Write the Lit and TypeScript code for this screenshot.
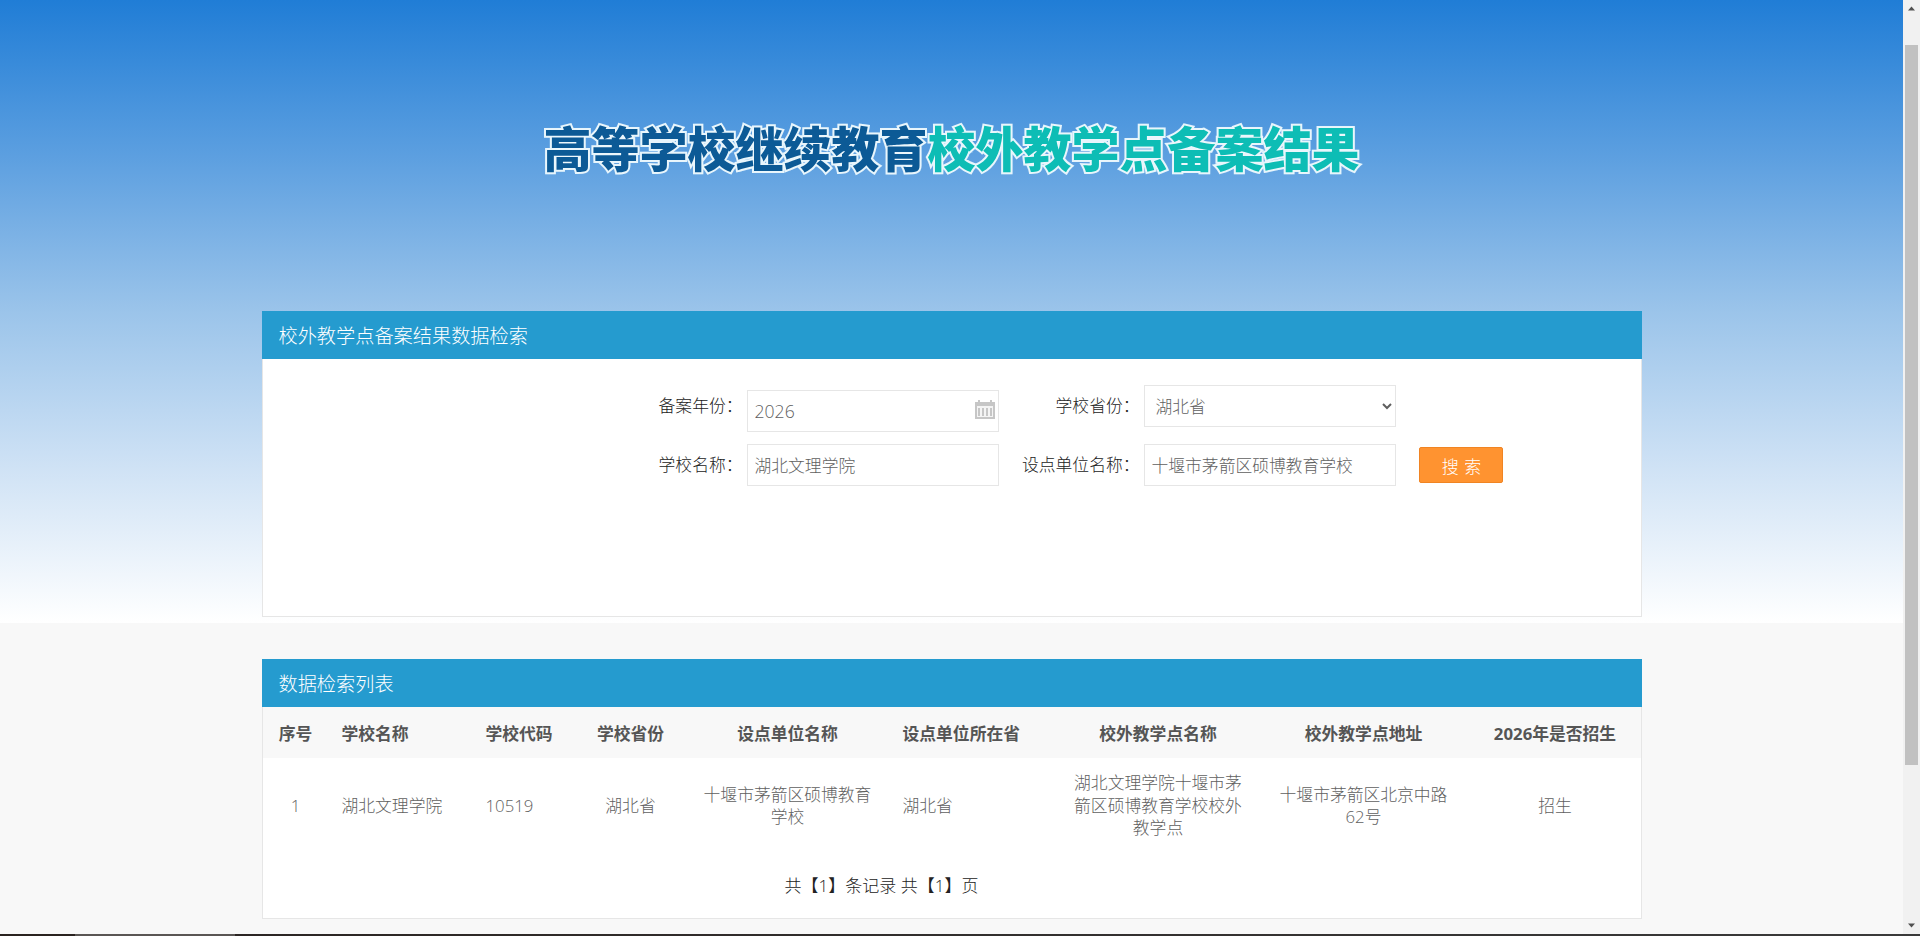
import { LitElement, html, css } from 'lit';
import { customElement } from 'lit/decorators.js';

const cols = [
  { title: '序号', cls: 'c1 center', value: '1' },
  { title: '学校名称', cls: 'c2', value: '湖北文理学院' },
  { title: '学校代码', cls: 'c3', value: '10519' },
  { title: '学校省份', cls: 'c4 center', value: '湖北省' },
  { title: '设点单位名称', cls: 'c5 center', value: '十堰市茅箭区硕博教育学校' },
  { title: '设点单位所在省', cls: 'c6', value: '湖北省' },
  { title: '校外教学点名称', cls: 'c7 center', value: '湖北文理学院十堰市茅箭区硕博教育学校校外教学点' },
  { title: '校外教学点地址', cls: 'c8 center', value: '十堰市茅箭区北京中路62号' },
  { title: '2026年是否招生', cls: 'c9 center', value: '招生' },
];

@customElement('app-root')
export class AppRoot extends LitElement {
  static styles = css`
    :host {
      display: flex;
      flex-direction: column;
      height: 936px;
      overflow: hidden;
      background: #f8f8f8;
      font-family: "Open Sans", "Noto Sans CJK SC", sans-serif;
      font-size: 16.8px;
      color: #333;
    }
    * {
      box-sizing: border-box;
    }
    .window {
      display: flex;
      height: 934px;
    }
    .page {
      flex: 1;
      min-width: 0;
      overflow: hidden;
    }

    /* header band */
    .hero {
      height: 623px;
      padding-top: 311px;
      position: relative;
      background: linear-gradient(180deg, #207dd6 0%, #5c9fe0 25%, #9bc4ea 50%, #cfe2f5 75%, #ffffff 100%);
    }
    .title {
      position: absolute;
      top: 113px;
      left: 0;
      right: 0;
      text-align: center;
      font-family: "Noto Sans CJK SC", sans-serif;
      font-size: 48px;
      line-height: 66px;
      font-weight: 900;
      white-space: nowrap;
      color: #0c5a96;
      -webkit-text-stroke: 4px #e6f5fc;
      paint-order: stroke fill;
      text-shadow: 0 0 3px rgba(255, 255, 255, 0.5);
      filter: blur(0.5px);
    }
    .title em {
      font-style: normal;
      color: #0dbdb5;
    }

    /* panels */
    .panel {
      width: 1380px;
      margin: 0 auto;
      background: #fff;
      border: 1px solid #e6e6e6;
      border-top: 0;
    }
    .panel-head {
      height: 48px;
      margin: 0 -1px;
      padding: 1px 0 0 17px;
      background: #259bcf;
      color: #fff;
      font-size: 19.2px;
      font-weight: 300;
      line-height: 47px;
    }
    .search-body {
      height: 257px;
      padding: 26px 0 0 339px;
    }
    .form {
      display: grid;
      grid-template-columns: 145px 252px 145px 252px auto;
      grid-template-rows: 47px 42px;
      row-gap: 12px;
      justify-content: start;
    }
    .form label {
      height: 42px;
      padding-right: 4px;
      text-align: right;
      line-height: 42px;
      font-weight: 300;
      color: #222;
      white-space: nowrap;
    }
    .field {
      position: relative;
      height: 42px;
    }
    .field.lower {
      margin-top: 5px;
    }
    .field input,
    .field select {
      width: 100%;
      height: 42px;
      padding: 0 7px;
      border: 1px solid #e6e6e6;
      border-radius: 0;
      background: #fff;
      color: #5f5f5f;
      font: inherit;
      font-weight: 300;
      outline: none;
    }
    .field.lower input {
      font-size: 17.6px;
    }
    .cal {
      position: absolute;
      top: 9px;
      right: 4px;
      width: 20px;
      height: 20px;
    }
    .btn {
      width: 84px;
      height: 36px;
      margin: 3px 0 0 23px;
      padding: 0 0 0 2px;
      border: 1px solid #f08423;
      border-radius: 2px;
      background: #ff9330;
      color: #fff;
      font: inherit;
      font-size: 17px;
      font-weight: 300;
      word-spacing: 1px;
    }

    /* result list */
    .list {
      margin-top: 36px;
    }
    table {
      width: 100%;
      table-layout: fixed;
      border-collapse: collapse;
    }
    th {
      height: 51px;
      padding: 0 8px 0 15px;
      background: #f8f8f8;
      color: #555;
      font-weight: 700;
      text-align: left;
      white-space: nowrap;
    }
    td {
      height: 94px;
      padding: 2px 15px 0;
      color: #5f5f5f;
      font-weight: 300;
      line-height: 22.5px;
    }
    .center {
      text-align: center;
    }
    th.center {
      padding-left: 0;
      padding-right: 0;
    }
    .c1 { width: 66px; }
    .c2 { width: 142px; padding-left: 13px; }
    .c3 { width: 103px; }
    .c4 { width: 114px; }
    .c5 { width: 200px; }
    .c6 { width: 171px; }
    .c7 { width: 199px; }
    .c8 { width: 212px; }
    .pager {
      height: 66px;
      padding: 3px 140px 0 0;
      text-align: center;
      font-size: 17px;
      font-weight: 300;
      color: #222;
      line-height: 62px;
    }

    /* classic scrollbar of the window */
    .scrollbar {
      display: flex;
      flex-direction: column;
      align-items: center;
      width: 17px;
      background: #f1f1f1;
    }
    .arrow {
      flex: none;
      width: 17px;
      height: 17px;
      fill: #505050;
    }
    .thumb {
      width: 13px;
      height: 720px;
      margin-top: 28px;
      background: #c1c1c1;
    }
    .spring {
      flex: 1;
    }

    .strip {
      height: 2px;
      background: linear-gradient(90deg, #2a2320 75px, #5a5654 75px, #5a5654 235px, #2c2624 235px, #3a3a3a 100%);
    }
  `;

  render() {
    return html`
      <div class="window">
        <div class="page">
          <div class="hero">
            <div class="title">高等学校继续教育<em>校外教学点备案结果</em></div>
            <section class="panel">
              <div class="panel-head">校外教学点备案结果数据检索</div>
              <div class="search-body">
                <form class="form">
                  <label>备案年份：</label>
                  <div class="field lower">
                    <input .value=${'2026'} />
                    <svg class="cal" viewBox="0 0 20 20">
                      <path fill="#c6c6c6" d="M0 3h3V1h2v2h10V1h2v2h3v17H0z" />
                      <path fill="#f4f4f4" d="M2 7h16v11H2z" />
                      <path fill="#c6c6c6" d="M3 9h2v8H3zM7 9h2v8H7zM11 9h2v8h-2zM15 9h2v8h-2z" />
                    </svg>
                  </div>
                  <label>学校省份：</label>
                  <div class="field">
                    <select>
                      <option>湖北省</option>
                    </select>
                  </div>
                  <span></span>
                  <label>学校名称：</label>
                  <div class="field"><input .value=${'湖北文理学院'} /></div>
                  <label>设点单位名称：</label>
                  <div class="field"><input .value=${'十堰市茅箭区硕博教育学校'} /></div>
                  <button class="btn" type="button">搜 索</button>
                </form>
              </div>
            </section>
          </div>
          <section class="panel list">
            <div class="panel-head">数据检索列表</div>
            <table>
              <thead>
                <tr>${cols.map((c) => html`<th class=${c.cls}>${c.title}</th>`)}</tr>
              </thead>
              <tbody>
                <tr>${cols.map((c) => html`<td class=${c.cls}>${c.value}</td>`)}</tr>
              </tbody>
            </table>
            <div class="pager">共【1】条记录 共【1】页</div>
          </section>
        </div>
        <div class="scrollbar">
          <svg class="arrow" viewBox="0 0 17 17"><path d="M8.5 6.5 12 10.5H5z" /></svg>
          <div class="thumb"></div>
          <div class="spring"></div>
          <svg class="arrow" viewBox="0 0 17 17"><path d="M8.5 10.5 5 6.5h7z" /></svg>
        </div>
      </div>
      <div class="strip"></div>
    `;
  }
}
